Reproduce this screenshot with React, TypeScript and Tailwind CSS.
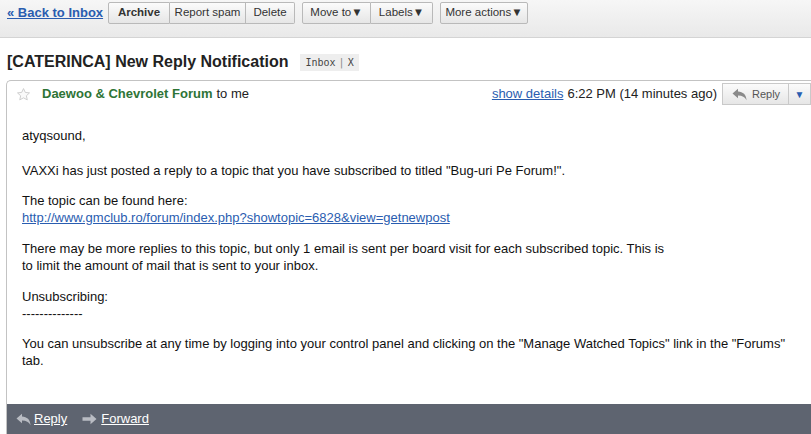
import React from 'react';

const btn =
  'h-[22px] flex items-center justify-center border border-[#b9b9b9] bg-gradient-to-b from-[#fbfbfb] to-[#e6e6e6] text-[11.5px] text-[#333]';

function Star() {
  return (
    <svg width="15" height="15" viewBox="0 0 24 24">
      <path
        d="M12 2.5l2.9 6.2 6.7.7-5 4.6 1.4 6.6L12 17.3l-6 3.3 1.4-6.6-5-4.6 6.7-.7z"
        fill="#fafafa"
        stroke="#cfcfcf"
        strokeWidth="1.6"
        strokeLinejoin="round"
      />
    </svg>
  );
}

function ReplyArrow({ color }: { color: string }) {
  return (
    <svg width="15" height="13" viewBox="0 0 15 13">
      <path d="M0.5 5.5L6 0.8V3.4C11 3.6 14.3 6.6 14.5 12.2C12.8 9.2 10.4 7.6 6 7.6V10.2Z" fill={color} />
    </svg>
  );
}

function ForwardArrow({ color }: { color: string }) {
  return (
    <svg width="15" height="12" viewBox="0 0 15 12">
      <path d="M0.5 4.3H8.5V0.8L14.5 6L8.5 11.2V7.7H0.5Z" fill={color} />
    </svg>
  );
}

export default function App() {
  return (
    <div className="w-[811px] h-[434px] overflow-hidden bg-white font-['Liberation_Sans',Arial,sans-serif] text-[#222]">
      {/* toolbar */}
      <div className="h-[38px] pt-[2px] pl-[7px] flex items-start bg-gradient-to-b from-[#f6f6f6] to-[#e9e9e9] border-b border-[#d4d4d4]">
        <a className="w-[101px] mt-[1px] text-[13px] font-bold text-[#2a5db0] underline leading-[20px]">« Back to Inbox</a>
        <div className="flex">
          <div className={`${btn} w-[62px] font-bold text-[#222] rounded-l-[2px]`}>Archive</div>
          <div className={`${btn} w-[76px] border-l-0`}>Report spam</div>
          <div className={`${btn} w-[49px] border-l-0 rounded-r-[2px]`}>Delete</div>
        </div>
        <div className="flex ml-[7px]">
          <div className={`${btn} w-[69px] rounded-l-[2px]`}>Move to▼</div>
          <div className={`${btn} w-[62px] border-l-0 rounded-r-[2px]`}>Labels▼</div>
        </div>
        <div className="flex ml-[7px]">
          <div className={`${btn} w-[88px] rounded-[2px]`}>More actions▼</div>
        </div>
      </div>

      {/* subject */}
      <div className="h-[42px] pl-[7px] pt-[6px] flex items-center">
        <h1 className="text-[16px] font-bold text-[#222]">[CATERINCA] New Reply Notification</h1>
        <span className="ml-[12px] h-[17px] px-[5px] flex items-center bg-[#eeeeee] font-['DejaVu_Sans_Mono',monospace] text-[10px] text-[#444]">
          Inbox<span className="mx-[3px] text-[#888]">|</span>X
        </span>
      </div>

      {/* message */}
      <div className="ml-[6px] h-[354px] flex flex-col border-l border-t border-[#c3c3c3] rounded-tl-[5px]">
        <div className="h-[25px] flex items-center pt-[1px]">
          <span className="ml-[9px] flex">
            <Star />
          </span>
          <span className="ml-[11px] text-[13px] font-bold text-[#2e7436]">Daewoo &amp; Chevrolet Forum</span>
          <span className="ml-[4px] text-[13px]">to me</span>
          <span className="ml-auto text-[13px] text-[#2a5db0] underline">show details</span>
          <span className="ml-[4px] text-[13px]">6:22 PM (14 minutes ago)</span>
          <div className="ml-[5px] flex h-[22px]">
            <div className="w-[67px] flex items-center pl-[9px] border border-[#c9c9c9] bg-gradient-to-b from-[#fbfbfb] to-[#e6e6e6] text-[11px] text-[#555] gap-[5px]">
              <ReplyArrow color="#8a8a8a" />
              Reply
            </div>
            <div className="w-[22px] flex items-center justify-center border border-l-0 border-[#c9c9c9] bg-gradient-to-b from-[#fbfbfb] to-[#e6e6e6] text-[10px] text-[#2a5db0]">
              ▼
            </div>
          </div>
        </div>

        <div className="flex-1 pl-[15px] pt-[22px] text-[13px] leading-[16.5px] text-[#111]">
          <p>atyqsound,</p>
          <p className="mt-[18px]">
            VAXXi has just posted a reply to a topic that you have subscribed to titled "Bug-uri Pe Forum!".
          </p>
          <p className="mt-[14px]">The topic can be found here:</p>
          <a className="text-[#2a5db0] underline">http://www.gmclub.ro/forum/index.php?showtopic=6828&amp;view=getnewpost</a>
          <p className="mt-[15px]">
            There may be more replies to this topic, but only 1 email is sent per board visit for each subscribed topic. This is
            <br />
            to limit the amount of mail that is sent to your inbox.
          </p>
          <p className="mt-[15px]">Unsubscribing:</p>
          <p>--------------</p>
          <p className="mt-[14px] pr-[8px]">
            You can unsubscribe at any time by logging into your control panel and clicking on the "Manage Watched Topics" link in the "Forums" tab.
          </p>
        </div>

        <div className="h-[30px] bg-[#5e6470] flex items-center pl-[9px] text-[13px] text-white">
          <ReplyArrow color="#b9bcc3" />
          <a className="ml-[3px] underline">Reply</a>
          <span className="ml-[15px] flex">
            <ForwardArrow color="#b9bcc3" />
          </span>
          <a className="ml-[4px] underline">Forward</a>
        </div>
      </div>
    </div>
  );
}
